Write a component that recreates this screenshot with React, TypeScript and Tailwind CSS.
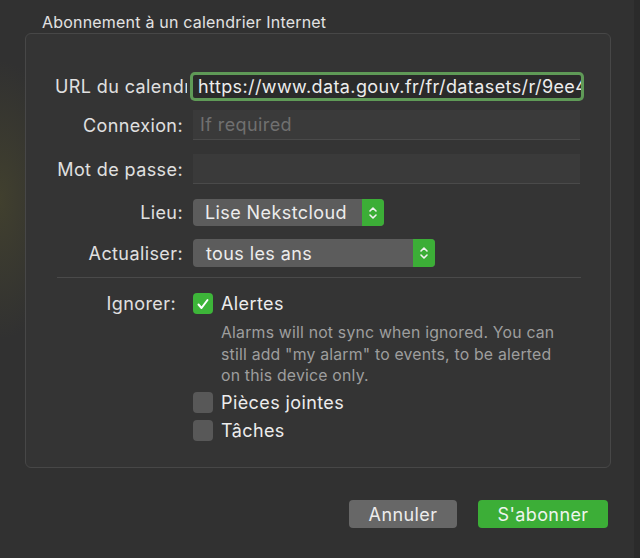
import React from "react";

function Stepper() {
  return (
    <div className="w-[22px] h-full bg-[#3cae37] rounded-r-[4px] flex items-center justify-center">
      <svg width="10" height="16" viewBox="0 0 10 16" fill="none" stroke="#f2f2f2" strokeWidth="1.6" strokeLinecap="round" strokeLinejoin="round">
        <path d="M2 6 L5 3 L8 6" />
        <path d="M2 10 L5 13 L8 10" />
      </svg>
    </div>
  );
}

function Checkbox({ checked }: { checked?: boolean }) {
  if (checked) {
    return (
      <div className="w-[20px] h-[21px] rounded-[4px] bg-[#3db539] flex items-center justify-center shrink-0">
        <svg width="14" height="14" viewBox="0 0 14 14" fill="none" stroke="#ffffff" strokeWidth="2" strokeLinecap="round" strokeLinejoin="round">
          <path d="M2.5 7.5 L5.5 11 L11.5 3" />
        </svg>
      </div>
    );
  }
  return <div className="w-[20px] h-[21px] rounded-[4px] bg-[#585858] shrink-0" />;
}

export default function App() {
  return (
    <div className="w-[640px] h-[558px] bg-[#313131] bg-[radial-gradient(ellipse_60px_140px_at_0px_200px,rgba(78,76,44,0.55),transparent)] font-['Inter',sans-serif] text-[#e4e4e4] overflow-hidden flex">
      <div className="flex-1 flex flex-col">
        <div className="pl-[42px] pt-[12px] text-[16px] leading-[20px] tracking-[0.2px] text-[#e2e2e2] whitespace-nowrap">
          Abonnement à un calendrier Internet
        </div>
        <div className="ml-[25px] mt-px w-[586px] h-[435px] border border-[#474747] rounded-[6px] bg-[#343434] flex flex-col text-[18px] tracking-[0.4px]">
          {/* URL */}
          <div className="flex items-center mt-[38px] h-[29px]">
            <div className="w-[157px] pl-[29px] shrink-0">
              <div className="w-[132px] overflow-hidden whitespace-nowrap text-[#e0e0e0]">URL du calendrier:</div>
            </div>
            <div className="ml-[10px] w-[388px] h-[23px] bg-[#2a2a2a] ring-[3px] ring-[#5f9a57] rounded-[2px] flex items-center pl-[5px] overflow-hidden whitespace-nowrap text-[#ededed]">
              https://www.data.gouv.fr/fr/datasets/r/9ee4
            </div>
          </div>
          {/* Connexion */}
          <div className="flex items-center mt-[9px] h-[30px]">
            <div className="w-[157px] text-right shrink-0 text-[#e0e0e0]">Connexion:</div>
            <div className="ml-[10px] w-[387px] h-[30px] bg-[#3a3a3a] border-b border-[#4a4a4a] flex items-center pl-[7px] text-[#707070]">
              If required
            </div>
          </div>
          {/* Mot de passe */}
          <div className="flex items-center mt-[14px] h-[30px]">
            <div className="w-[157px] text-right shrink-0 text-[#e0e0e0]">Mot de passe:</div>
            <div className="ml-[10px] w-[387px] h-[30px] bg-[#3a3a3a] border-b border-[#4a4a4a]" />
          </div>
          {/* Lieu */}
          <div className="flex items-center mt-[15px] h-[27px]">
            <div className="w-[157px] text-right shrink-0 text-[#e0e0e0]">Lieu:</div>
            <div className="ml-[10px] w-[191px] h-[27px] bg-[#5c5c5c] rounded-[4px] flex items-center">
              <div className="flex-1 pl-[12px] text-[#ececec] whitespace-nowrap overflow-hidden">Lise Nekstcloud</div>
              <Stepper />
            </div>
          </div>
          {/* Actualiser */}
          <div className="flex items-center mt-[13px] h-[28px]">
            <div className="w-[157px] text-right shrink-0 text-[#e0e0e0]">Actualiser:</div>
            <div className="ml-[10px] w-[242px] h-[28px] bg-[#5c5c5c] rounded-[4px] flex items-center">
              <div className="flex-1 pl-[13px] text-[#ececec] whitespace-nowrap">tous les ans</div>
              <Stepper />
            </div>
          </div>
          {/* separator */}
          <div className="ml-[31px] mr-[29px] mt-[10px] h-px bg-[#4a4a4a]" />
          {/* Ignorer */}
          <div className="flex mt-[15px]">
            <div className="w-[150px] text-right shrink-0 text-[#e0e0e0] leading-[21px]">Ignorer:</div>
            <div className="ml-[17px] flex flex-col">
              <div className="flex items-center gap-[8px] h-[21px]">
                <Checkbox checked />
                <span className="text-[#ececec]">Alertes</span>
              </div>
              <div className="ml-[28px] mt-[8px] text-[15.8px] tracking-[0.2px] leading-[21.5px] text-[#9e9e9e] w-[345px]">
                Alarms will not sync when ignored. You can still add "my alarm" to events, to be alerted on this device only.
              </div>
              <div className="flex items-center gap-[8px] h-[21px] mt-[5px]">
                <Checkbox />
                <span className="text-[#ececec]">Pièces jointes</span>
              </div>
              <div className="flex items-center gap-[8px] h-[21px] mt-[7px]">
                <Checkbox />
                <span className="text-[#ececec]">Tâches</span>
              </div>
            </div>
          </div>
        </div>
        <div className="flex justify-end gap-[21px] mt-[32px] pr-[26px] text-[18px] tracking-[0.4px]">
          <div className="w-[108px] h-[28px] rounded-[4px] bg-[#676767] flex items-center justify-center text-[#ececec]">Annuler</div>
          <div className="w-[130px] h-[28px] rounded-[4px] bg-[#3cae37] flex items-center justify-center text-[#eef5ee]">S'abonner</div>
        </div>
      </div>
      <div className="w-[6px] h-full bg-[#2b2b2b]" />
    </div>
  );
}
